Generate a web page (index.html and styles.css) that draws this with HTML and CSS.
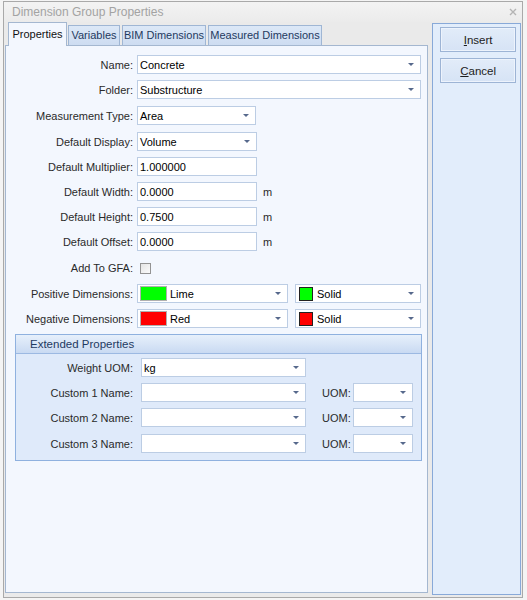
FILE: index.html
```html
<!DOCTYPE html>
<html>
<head>
<meta charset="utf-8">
<link rel="stylesheet" href="styles.css">
</head>
<body>
<div class="window">
  <div class="titlebar">
    <span class="title">Dimension Group Properties</span>
    <svg class="close" width="8" height="8" viewBox="0 0 8 8"><path d="M1 1 L7 7 M7 1 L1 7" stroke="#b4b4b4" stroke-width="1.4"/></svg>
  </div>
  <div class="client">
    <div class="tabs-area">
      <div class="tabstrip">
        <div class="tab active t1">Properties</div>
        <div class="tab t2">Variables</div>
        <div class="tab t3">BIM Dimensions</div>
        <div class="tab t4">Measured Dimensions</div>
      </div>
      <div class="pane">
        <div class="row"><span class="lbl">Name:</span><div class="field combo w-long"><span class="val">Concrete</span><i class="arrow"></i></div></div>
        <div class="row"><span class="lbl">Folder:</span><div class="field combo w-long"><span class="val">Substructure</span><i class="arrow"></i></div></div>
        <div class="row up1"><span class="lbl">Measurement Type:</span><div class="field combo w-mid"><span class="val">Area</span><i class="arrow"></i></div></div>
        <div class="row up1"><span class="lbl">Default Display:</span><div class="field combo w-mid2"><span class="val">Volume</span><i class="arrow"></i></div></div>
        <div class="row"><span class="lbl">Default Multiplier:</span><div class="field w-mid2"><span class="val">1.000000</span></div></div>
        <div class="row"><span class="lbl">Default Width:</span><div class="field w-mid2"><span class="val">0.0000</span></div><span class="unit">m</span></div>
        <div class="row"><span class="lbl">Default Height:</span><div class="field w-mid2"><span class="val">0.7500</span></div><span class="unit">m</span></div>
        <div class="row"><span class="lbl">Default Offset:</span><div class="field w-mid2"><span class="val">0.0000</span></div><span class="unit">m</span></div>
        <div class="row up1"><span class="lbl">Add To GFA:</span><span class="chk"></span></div>
        <div class="row up1"><span class="lbl">Positive Dimensions:</span>
          <div class="field combo w-color"><span class="swatch big lime"></span><span class="val">Lime</span><i class="arrow"></i></div>
          <div class="field combo w-style"><span class="swatch small lime"></span><span class="val">Solid</span><i class="arrow"></i></div>
        </div>
        <div class="row"><span class="lbl">Negative Dimensions:</span>
          <div class="field combo w-color"><span class="swatch big red"></span><span class="val">Red</span><i class="arrow"></i></div>
          <div class="field combo w-style"><span class="swatch small red"></span><span class="val">Solid</span><i class="arrow"></i></div>
        </div>
        <div class="group">
          <div class="group-head">Extended Properties</div>
          <div class="group-body">
            <div class="row"><span class="lbl glbl">Weight UOM:</span><div class="field combo w-g"><span class="val">kg</span><i class="arrow"></i></div></div>
            <div class="row"><span class="lbl glbl">Custom 1 Name:</span><div class="field combo w-g"><span class="val"></span><i class="arrow"></i></div><span class="uom">UOM:</span><div class="field combo w-uom"><span class="val"></span><i class="arrow"></i></div></div>
            <div class="row"><span class="lbl glbl">Custom 2 Name:</span><div class="field combo w-g"><span class="val"></span><i class="arrow"></i></div><span class="uom">UOM:</span><div class="field combo w-uom"><span class="val"></span><i class="arrow"></i></div></div>
            <div class="row up1"><span class="lbl glbl">Custom 3 Name:</span><div class="field combo w-g"><span class="val"></span><i class="arrow"></i></div><span class="uom">UOM:</span><div class="field combo w-uom"><span class="val"></span><i class="arrow"></i></div></div>
          </div>
        </div>
      </div>
    </div>
    <div class="side">
      <div class="btn"><span><u>I</u>nsert</span></div>
      <div class="btn"><span><u>C</u>ancel</span></div>
    </div>
  </div>
</div>
</body>
</html>
```

FILE: styles.css
```css
* { box-sizing: border-box; }
body {
  margin: 0;
  background: #f4f4f4;
  font-family: "Liberation Sans", Arial, sans-serif;
  font-size: 11px;
  color: #2a2a2a;
}
.window {
  margin: 1px 0 0 3px;
  width: 520px;
  height: 597px;
  border: 1px solid #a9a9a9;
  background: #eaeaea;
  display: flex;
  flex-direction: column;
}
.titlebar {
  height: 20px;
  display: flex;
  align-items: center;
  justify-content: space-between;
  padding: 0 5px 0 8px;
  background: linear-gradient(#f3f3f3, #ebebeb);
}
.title {
  font-size: 12px;
  color: #a3a3a3;
}
.close { display: block; }
.client {
  flex: 1;
  display: flex;
  gap: 4px;
  padding: 0 1px 2px 1px;
}
.tabs-area {
  width: 424px;
  display: flex;
  flex-direction: column;
  margin-bottom: 2px;
}
.tabstrip {
  height: 23px;
  display: flex;
  align-items: flex-end;
  padding-left: 3px;
}
.tab {
  height: 20px;
  line-height: 18px;
  text-align: center;
  border: 1px solid #9fb6d4;
  border-bottom: none;
  background: linear-gradient(#dce8f7, #cddcf1);
  color: #1f3a5f;
  margin-right: 2px;
  white-space: nowrap;
}
.tab.active {
  height: 24px;
  line-height: 22px;
  margin-bottom: -1px;
  margin-right: 1px;
  background: #f3f7fe;
  color: #111;
  border-color: #a4b7d0;
  position: relative;
  z-index: 1;
}
.t1 { width: 59px; }
.t2 { width: 52px; }
.t3 { width: 84px; }
.t4 { width: 114px; }
.pane {
  flex: 1;
  border: 1px solid #a4b7d0;
  background: #f3f7fe;
  padding-top: 9px;
  display: flex;
  flex-direction: column;
  align-items: flex-start;
}
.row {
  display: flex;
  align-items: center;
  height: 19px;
  margin-bottom: 6px;
  flex: none;
}
.up1 { margin-top: 1px; }
.lbl {
  width: 127px;
  margin-right: 4px;
  text-align: right;
  color: #2a2a2a;
  white-space: nowrap;
}
.glbl {
  width: 117px;
  margin-right: 8px;
}
.field {
  height: 19px;
  background: #fff;
  border: 1px solid #bccde4;
  display: flex;
  align-items: center;
  padding-left: 2px;
  color: #000;
}
.val { flex: 1; white-space: nowrap; }
.arrow {
  width: 0;
  height: 0;
  border-left: 3px solid transparent;
  border-right: 3px solid transparent;
  border-top: 3px solid #56698c;
  margin-right: 6px;
}
.w-long { width: 284px; }
.w-mid { width: 119px; }
.w-mid2 { width: 120px; }
.w-color { width: 151px; }
.w-style { width: 126px; margin-left: 7px; }
.w-g { width: 165px; }
.w-uom { width: 60px; }
.unit { margin-left: 6px; color: #2a2a2a; }
.chk {
  width: 11px;
  height: 11px;
  margin-left: 3px;
  margin-top: 2px;
  border: 1px solid #939393;
  background: linear-gradient(135deg, #e4e4e4, #fbfbfb);
}
.swatch { flex: none; }
.swatch.big {
  width: 27px;
  height: 15px;
  margin-right: 3px;
  border: 1px solid #b0b0b0;
}
.swatch.small {
  width: 14px;
  height: 14px;
  margin-left: 1px;
  margin-right: 4px;
  border: 1px solid #222;
}
.lime { background: #00ff00; }
.red { background: #ff0000; }
.group {
  margin-left: 9px;
  width: 407px;
  flex: none;
  border: 1px solid #8fb1df;
  background: #dfeafa;
}
.group-head {
  height: 19px;
  line-height: 18px;
  padding-left: 14px;
  border-bottom: 1px solid #9cb9e2;
  background: linear-gradient(#e7f0fb, #c9daf2);
  color: #1e3a62;
  font-size: 11.5px;
}
.group-body {
  padding: 4px 0 1px 0;
  display: flex;
  flex-direction: column;
}
.uom {
  width: 28px;
  margin-left: 16px;
  margin-right: 3px;
  color: #2a2a2a;
}
.side {
  width: 89px;
  margin-top: 1px;
  border: 1px solid #88a9d8;
  background: #e2edfb;
  padding: 3px 0 0 7px;
  display: flex;
  flex-direction: column;
  gap: 6px;
}
.btn {
  width: 76px;
  height: 25px;
  border: 1px solid #9db4d5;
  box-shadow: inset 0 0 0 1px #edf3fc;
  background: linear-gradient(#e2ecf9, #d6e3f5);
  display: flex;
  align-items: center;
  justify-content: center;
  color: #1c1c1c;
  font-size: 11.5px;
}
```
